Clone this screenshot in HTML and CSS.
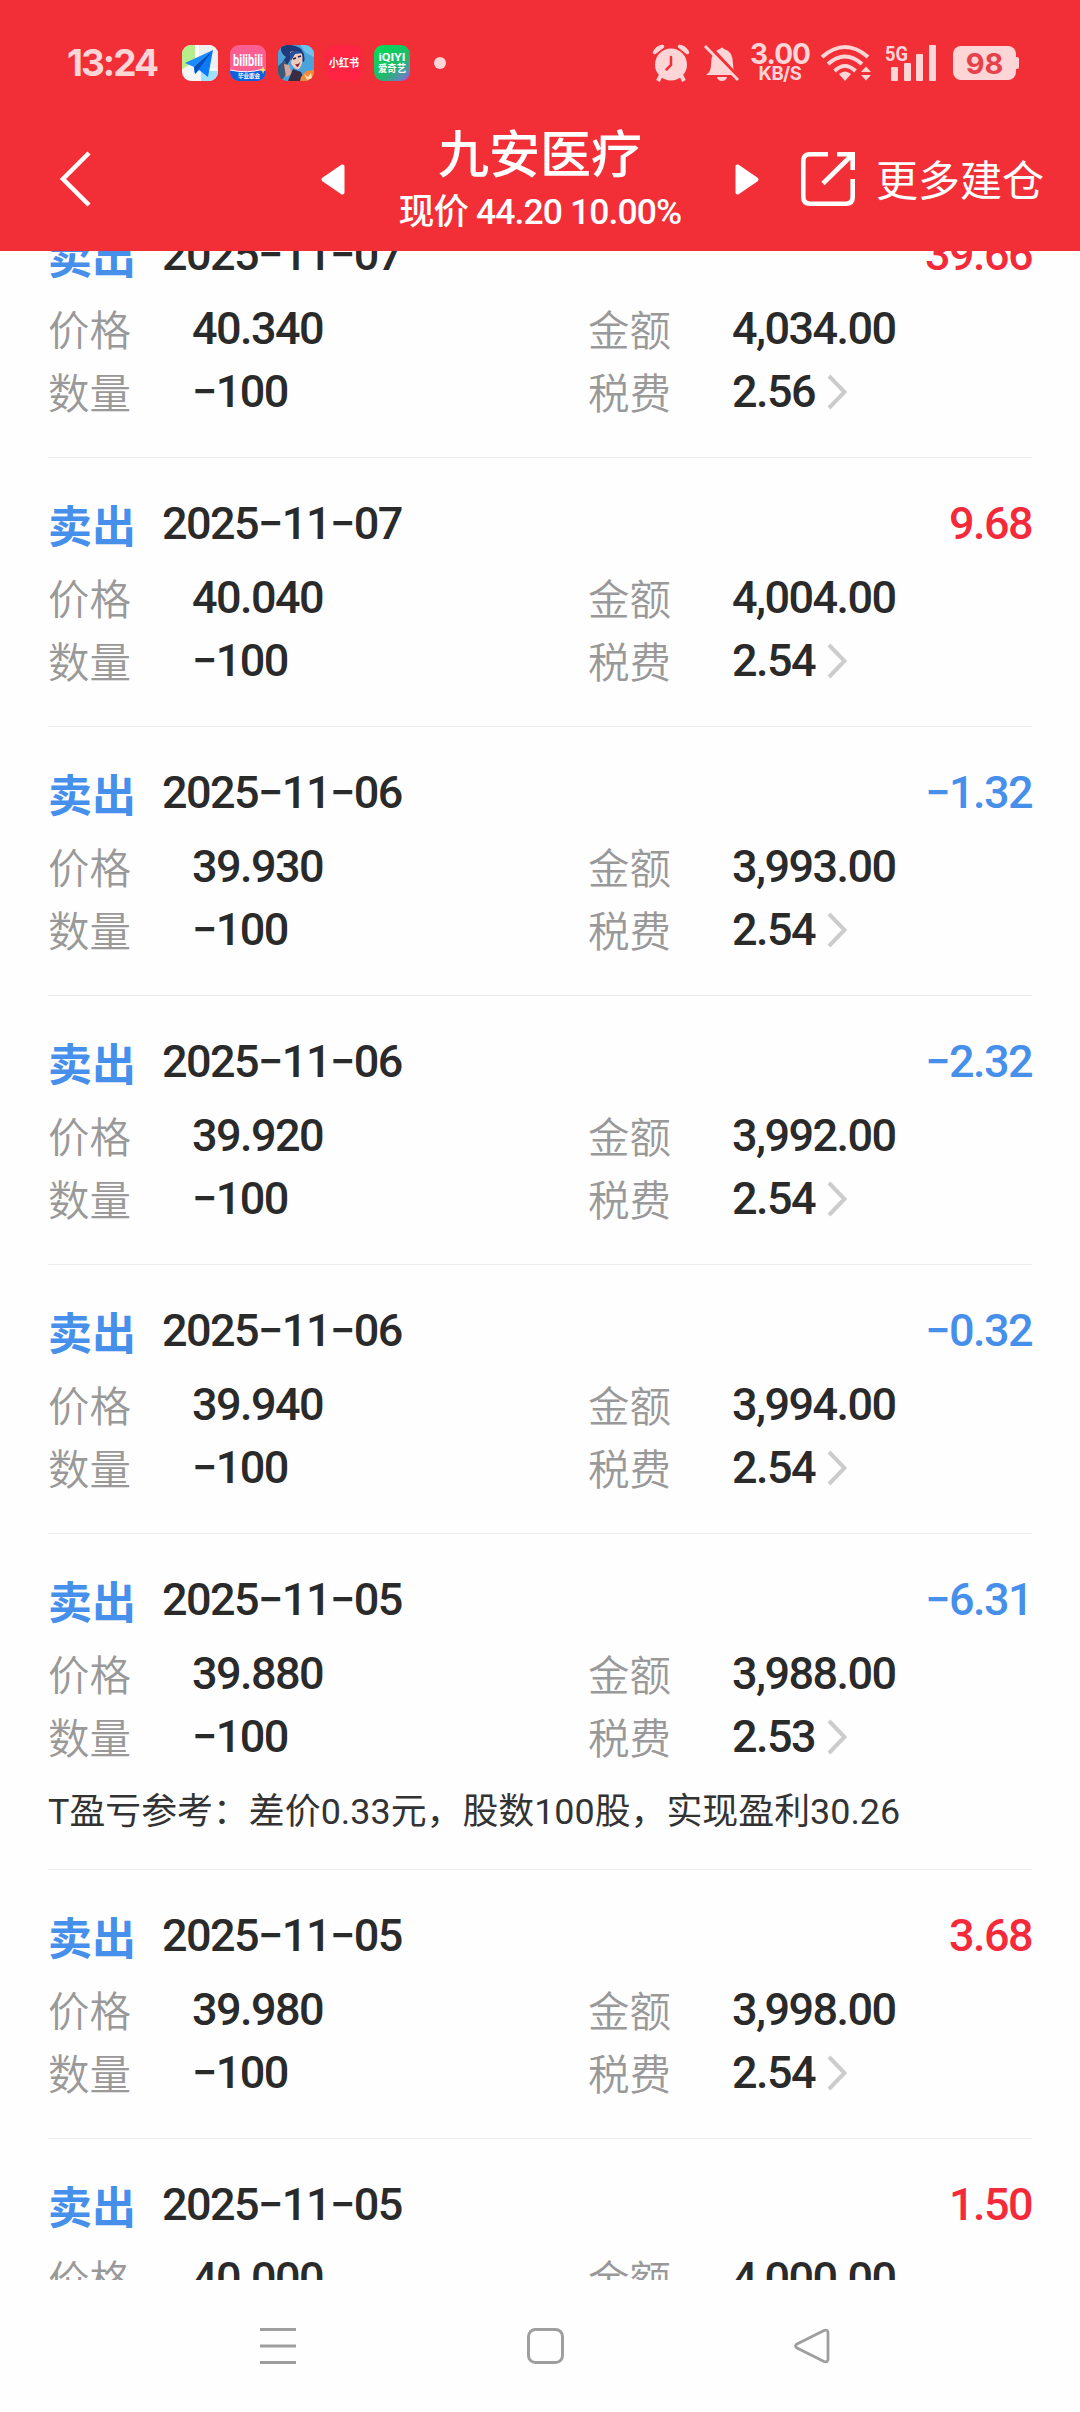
FILE: index.html
```html
<!DOCTYPE html>
<html lang="zh-CN">
<head>
  <meta charset="UTF-8">
  <title>九安医疗</title>
  <link rel="stylesheet" href="styles.css">
</head>
<body>

  <svg width="0" height="0" class="defs">
    <symbol id="chevron" viewBox="0 0 20 36"><path d="M2 2l15.500 16L2 34" fill="none" stroke="#ccc" stroke-width="4"/></symbol>
  </svg>

  <header class="header">
    <!-- 状态栏 -->
    <div class="status-bar">
      <span class="time">13:24</span>
      <div class="apps">
        <svg width="36" height="36" viewBox="0 0 36 36">
          <defs><clipPath id="round"><rect width="36" height="36" rx="9"/></clipPath></defs>
          <g clip-path="url(#round)">
            <rect width="36" height="36" fill="#f4f6f5"/>
            <path d="M0 0h13v17L0 24z" fill="#b5ee8b"/>
            <path d="M17 0h19v23H17z" fill="#eeeff0"/>
            <path d="M13 0h4v12l-4 3z" fill="#fff"/>
            <path d="M19 26h17v10H19z" fill="#9fe0fb"/>
            <path d="M31 5L3 18l9 4z" fill="#1a8cff"/>
            <path d="M31 5L12 22l1 7 4-4 9 7z" fill="#0a7cf8"/>
            <path d="M31 5L12 22l1 7 4-5z" fill="#0650c0"/>
          </g>
        </svg>
        <svg width="36" height="36" viewBox="0 0 36 36">
          <g clip-path="url(#round)">
            <rect width="36" height="36" fill="#fb5f92"/>
            <path d="M0 25q18 4 36-1v12H0z" fill="#0f5fdc"/>
            <path d="M0 25q18 4 33-1" fill="none" stroke="#fff" stroke-width="1"/>
            <path d="M33 21l1 3 3 1-3 1-1 3-1-3-3-1 3-1z" fill="#ffe36b"/>
          </g>
          <text x="18" y="21" class="app-bili" textLength="30" lengthAdjust="spacingAndGlyphs">bilibili</text>
          <text x="19" y="33" class="app-bili-sub">毕业歌会</text>
        </svg>
        <svg width="36" height="36" viewBox="0 0 36 36">
          <g clip-path="url(#round)">
            <rect width="36" height="36" fill="#4aa3da"/>
            <path d="M22 0h14v12l-8-4z" fill="#6fc2ea"/>
            <path d="M3 1q10-3 19 2 6 6 4 14l-12-6Q9 22 4 27q-2-8 4-15Q2 8 3 1z" fill="#1f3a78"/>
            <path d="M12 7q7-3 12 2 2 9-3 15-5 1-8-6z" fill="#f0c9bd"/>
            <path d="M11 9q5-6 13-1l-7 1-4 7z" fill="#24509a"/>
            <path d="M15 14l3-1M20 12l3-1" stroke="#27254a" stroke-width="1.500"/>
            <path d="M17 19q3 1 5-2-1 5-3 5z" fill="#8a1f36"/>
            <path d="M0 21l7-6 4 9-6 10H0z" fill="#3f5876"/>
            <path d="M6 19l5 1 3 9-6 3z" fill="#d6a59d"/>
            <path d="M10 36l5-12 8 3 4 9z" fill="#3b2c46"/>
            <path d="M23 32l5-6 8-1v11H22z" fill="#f28a3a"/>
            <path d="M26 29l4 3 3-4 1 5-5 2z" fill="#ffe2b4"/>
          </g>
        </svg>
        <svg width="36" height="36" viewBox="0 0 36 36">
          <rect width="36" height="36" rx="9" fill="#ff2442"/>
          <text x="18" y="22" class="app-red" textLength="30" lengthAdjust="spacingAndGlyphs">小红书</text>
        </svg>
        <svg width="36" height="36" viewBox="0 0 36 36">
          <defs>
            <linearGradient id="qiyi" x1="0.200" y1="0" x2="1" y2="1">
              <stop offset="0" stop-color="#07d95a"/>
              <stop offset="0.550" stop-color="#1fb968"/>
              <stop offset="0.800" stop-color="#558fae"/>
              <stop offset="1" stop-color="#a94df5"/>
            </linearGradient>
          </defs>
          <rect width="36" height="36" rx="9" fill="url(#qiyi)"/>
          <text x="18" y="16" class="app-qiyi" textLength="27" lengthAdjust="spacingAndGlyphs">iQIYI</text>
          <text x="18" y="27" class="app-qiyi-sub" textLength="28" lengthAdjust="spacingAndGlyphs">爱奇艺</text>
        </svg>
      </div>
      <span class="dot"></span>

      <div class="system">
        <svg class="alarm" width="38" height="38" viewBox="0 0 38 38">
          <path d="M9 31l-3 6M29 31l3 6" stroke="#fdd5d7" stroke-width="4"/>
          <path d="M1 9Q3 2 11 1L12 3 3 10zM37 9Q35 2 27 1L26 3l9 7z" fill="#fdd5d7" stroke="#fdd5d7"/>
          <circle cx="19" cy="20.500" r="16" fill="#fdd5d7"/>
          <path d="M19 13v8l-4.500 4.500" fill="none" stroke="#f22f37" stroke-width="2.500" stroke-linecap="round"/>
        </svg>
        <svg class="bell" width="36" height="38" viewBox="0 0 36 38">
          <path d="M2 31q5-3 5-10 0-10 5-14 3-2 4-2 2-3 4 0 9 2 9 15 0 8 5 11z" fill="#fdd5d7"/>
          <path d="M13 33h10q-1 4-5 4t-5-4z" fill="#fdd5d7"/>
          <path d="M4 1l32 34" stroke="#f22f37" stroke-width="4"/>
          <path d="M1 2l33 34" stroke="#fdd5d7" stroke-width="2.800"/>
        </svg>
        <div class="speed">
          <span class="speed-num">3.00</span>
          <span class="speed-unit">KB/S</span>
        </div>
        <svg class="wifi" width="52" height="38" viewBox="0 0 52 38">
          <g fill="none" stroke="#fdd5d7" stroke-width="4">
            <path d="M2 13Q25-7 48 13"/>
            <path d="M8 20q17-15 34 0"/>
            <path d="M14.500 27q10.500-10 21 0"/>
          </g>
          <path d="M25 37l-6-7q6-5 12 0z" fill="#fdd5d7"/>
          <path d="M41 28l5-5.500 5 5.500zM41 31h10l-5 5.500z" fill="#fdd5d7"/>
        </svg>
        <svg class="signal" width="54" height="38" viewBox="0 0 54 38">
          <text x="0" y="16.500" class="net" textLength="23" lengthAdjust="spacingAndGlyphs">5G</text>
          <g fill="#fdd5d7">
            <rect x="6" y="23" width="7" height="14" rx="1"/>
            <rect x="19" y="19" width="7" height="18" rx="1"/>
            <rect x="31" y="10" width="7" height="27" rx="1"/>
            <rect x="44" y="1" width="7" height="36" rx="1"/>
          </g>
        </svg>
        <span class="battery">98</span>
      </div>
    </div>

    <!-- 标题栏 -->
    <div class="title-bar">
      <svg class="back" width="34" height="56" viewBox="0 0 34 56"><path d="M31 2L5 28l26 26" fill="none" stroke="#fff" stroke-width="4.500"/></svg>
      <svg class="prev" width="24" height="31" viewBox="0 0 24 31"><path d="M21.500 2.500v26L2.500 15.500z" fill="#fff" stroke="#fff" stroke-width="4" stroke-linejoin="round"/></svg>
      <div class="stock">
        <h1>九安医疗</h1>
        <p>现价 44.20 10.00%</p>
      </div>
      <svg class="next" width="24" height="31" viewBox="0 0 24 31"><path d="M2.500 2.500v26l19-13z" fill="#fff" stroke="#fff" stroke-width="4" stroke-linejoin="round"/></svg>
      <div class="more">
        <svg width="54" height="54" viewBox="0 0 54 54" fill="none" stroke="#fff" stroke-width="4.600">
          <path d="M27 2.300H9Q2.300 2.300 2.300 9v36Q2.300 51.700 9 51.700h36q6.700 0 6.700-6.700V27"/>
          <path d="M36 2.300h15.700V18M51 3L22 31.500"/>
        </svg>
        <span>更多建仓</span>
      </div>
    </div>
  </header>

  <!-- 交易记录 -->
  <main class="list">
    <section class="record">
      <div class="head"><span class="type">卖出</span><span class="date">2025−11−07</span><span class="profit up">39.66</span></div>
      <div class="grid">
        <span class="label">价格</span><span class="value">40.340</span>
        <span class="label">金额</span><span class="value">4,034.00</span>
        <span class="label">数量</span><span class="value">−100</span>
        <span class="label">税费</span><span class="value">2.56<svg class="arrow"><use href="#chevron"/></svg></span>
      </div>
    </section>

    <section class="record">
      <div class="head"><span class="type">卖出</span><span class="date">2025−11−07</span><span class="profit up">9.68</span></div>
      <div class="grid">
        <span class="label">价格</span><span class="value">40.040</span>
        <span class="label">金额</span><span class="value">4,004.00</span>
        <span class="label">数量</span><span class="value">−100</span>
        <span class="label">税费</span><span class="value">2.54<svg class="arrow"><use href="#chevron"/></svg></span>
      </div>
    </section>

    <section class="record">
      <div class="head"><span class="type">卖出</span><span class="date">2025−11−06</span><span class="profit down">−1.32</span></div>
      <div class="grid">
        <span class="label">价格</span><span class="value">39.930</span>
        <span class="label">金额</span><span class="value">3,993.00</span>
        <span class="label">数量</span><span class="value">−100</span>
        <span class="label">税费</span><span class="value">2.54<svg class="arrow"><use href="#chevron"/></svg></span>
      </div>
    </section>

    <section class="record">
      <div class="head"><span class="type">卖出</span><span class="date">2025−11−06</span><span class="profit down">−2.32</span></div>
      <div class="grid">
        <span class="label">价格</span><span class="value">39.920</span>
        <span class="label">金额</span><span class="value">3,992.00</span>
        <span class="label">数量</span><span class="value">−100</span>
        <span class="label">税费</span><span class="value">2.54<svg class="arrow"><use href="#chevron"/></svg></span>
      </div>
    </section>

    <section class="record">
      <div class="head"><span class="type">卖出</span><span class="date">2025−11−06</span><span class="profit down">−0.32</span></div>
      <div class="grid">
        <span class="label">价格</span><span class="value">39.940</span>
        <span class="label">金额</span><span class="value">3,994.00</span>
        <span class="label">数量</span><span class="value">−100</span>
        <span class="label">税费</span><span class="value">2.54<svg class="arrow"><use href="#chevron"/></svg></span>
      </div>
    </section>

    <section class="record">
      <div class="head"><span class="type">卖出</span><span class="date">2025−11−05</span><span class="profit down">−6.31</span></div>
      <div class="grid">
        <span class="label">价格</span><span class="value">39.880</span>
        <span class="label">金额</span><span class="value">3,988.00</span>
        <span class="label">数量</span><span class="value">−100</span>
        <span class="label">税费</span><span class="value">2.53<svg class="arrow"><use href="#chevron"/></svg></span>
      </div>
      <p class="note">T盈亏参考：差价0.33元，股数100股，实现盈利30.26</p>
    </section>

    <section class="record">
      <div class="head"><span class="type">卖出</span><span class="date">2025−11−05</span><span class="profit up">3.68</span></div>
      <div class="grid">
        <span class="label">价格</span><span class="value">39.980</span>
        <span class="label">金额</span><span class="value">3,998.00</span>
        <span class="label">数量</span><span class="value">−100</span>
        <span class="label">税费</span><span class="value">2.54<svg class="arrow"><use href="#chevron"/></svg></span>
      </div>
    </section>

    <section class="record">
      <div class="head"><span class="type">卖出</span><span class="date">2025−11−05</span><span class="profit up">1.50</span></div>
      <div class="grid">
        <span class="label">价格</span><span class="value">40.000</span>
        <span class="label">金额</span><span class="value">4,000.00</span>
      </div>
    </section>
  </main>

  <!-- 系统导航 -->
  <nav class="nav">
    <svg width="36" height="38" viewBox="0 0 36 38"><path d="M0 2.500h36M0 19h36M0 35.500h36" stroke="#9e9e9e" stroke-width="3"/></svg>
    <svg width="38" height="38" viewBox="0 0 38 38"><rect x="2.500" y="2.500" width="34" height="33" rx="7" fill="none" stroke="#9e9e9e" stroke-width="3"/></svg>
    <svg width="38" height="38" viewBox="0 0 38 38"><path d="M31 3.500L4 17q-3 2 0 4l27 13.500q4 1.500 4-2.500V6q0-4-4-2.500z" fill="none" stroke="#9e9e9e" stroke-width="2.800" stroke-linejoin="round"/></svg>
  </nav>

</body>
</html>
```

FILE: styles.css
```css
* {
  box-sizing: border-box;
}

body {
  margin: 0;
  width: 1080px;
  height: 2412px;
  overflow: hidden;
  display: flex;
  flex-direction: column;
  background: #fefefe;
  color: #2a2a2a;
  font-family: Roboto, "Noto Sans CJK SC", sans-serif;
}

h1, p {
  margin: 0;
}

svg {
  display: block;
  flex: none;
  overflow: visible;
}

.defs {
  position: absolute;
}

.header {
  flex: none;
  height: 251px;
  background: #f22f37;
  color: #fff;
}

/* Status bar */
.status-bar {
  height: 108px;
  padding: 17px 61px 0 67px;
  display: flex;
  align-items: center;
  color: #fdd5d7;
}

.time {
  width: 115px;
  font-family: Inter, sans-serif;
  font-size: 37px;
  font-weight: 700;
  line-height: 40px;
  letter-spacing: -2px;
}

.apps {
  display: flex;
  gap: 12px;
}

.app-bili,
.app-bili-sub,
.app-red,
.app-qiyi,
.app-qiyi-sub {
  fill: #fff;
  text-anchor: middle;
  font-weight: 700;
}

.app-bili {
  font-size: 16px;
}

.app-bili-sub {
  font-size: 5.500px;
}

.app-red {
  font-size: 11px;
}

.app-qiyi {
  font-size: 10px;
}

.app-qiyi-sub {
  font-size: 10px;
}

.dot {
  width: 12px;
  height: 12px;
  margin-left: 24px;
  border-radius: 50%;
  background: #fdd5d7;
}

.system {
  margin-left: auto;
  display: flex;
  align-items: center;
}

.bell {
  margin-left: 14px;
}

.speed {
  width: 60px;
  margin-left: 10px;
  display: flex;
  flex-direction: column;
  align-items: center;
  font-family: Inter, sans-serif;
  font-weight: 700;
}

.speed-num {
  font-size: 28px;
  line-height: 22px;
  letter-spacing: -1px;
}

.speed-unit {
  font-size: 18.500px;
  line-height: 17px;
  letter-spacing: -0.500px;
}

.wifi {
  margin-left: 10px;
}

.signal {
  margin-left: 13px;
}

.net {
  fill: #fdd5d7;
  font-size: 21px;
  font-weight: 700;
}

.battery {
  position: relative;
  width: 63px;
  height: 34px;
  margin-left: 14px;
  margin-right: 3px;
  border-radius: 8px;
  background: #fdd5d7;
  color: #e8404a;
  font-family: Inter, sans-serif;
  font-size: 29px;
  font-weight: 700;
  line-height: 35px;
  text-align: center;
}

.battery::after {
  content: "";
  position: absolute;
  right: -3px;
  top: 11px;
  width: 4px;
  height: 12px;
  border-radius: 0 2px 2px 0;
  background: #fdd5d7;
}

/* Title bar */
.title-bar {
  height: 143px;
  padding: 0 36px 0 58px;
  display: flex;
  align-items: center;
}

.back,
.prev,
.next,
.more {
  margin-bottom: 1px;
}

.prev {
  margin-left: 229px;
}

.stock {
  width: 390px;
  text-align: center;
  padding-top: 4px;
}

.stock h1 {
  font-size: 51px;
  font-weight: 500;
  line-height: 60px;
}

.stock p {
  font-size: 35.500px;
  font-weight: 500;
  line-height: 52px;
  letter-spacing: -0.900px;
}

.more {
  margin-left: auto;
  display: flex;
  align-items: center;
  font-size: 42px;
}

.more span {
  margin-left: 21px;
  padding-top: 6px;
  line-height: 54px;
}

/* Records */
.list {
  flex: none;
  height: 2029px;
  padding: 0 48px;
  overflow: hidden;
}

.record {
  padding: 34px 0;
  border-bottom: 1px solid #ebebeb;
}

/* scrolled under the header */
.record:first-child {
  margin-top: -62px;
}

.head {
  display: flex;
  align-items: center;
  height: 63px;
  margin-bottom: 11px;
}

.type {
  width: 114px;
  padding-top: 9px;
  color: #468fea;
  font-size: 44px;
  font-weight: 700;
  line-height: 60px;
}

.date,
.profit,
.value {
  font-size: 45px;
  font-weight: 500;
  letter-spacing: -1.550px;
}

.profit {
  margin-left: auto;
}

.up {
  color: #f42a3b;
}

.down {
  color: #468fea;
}

.grid {
  display: grid;
  grid-template-columns: 144px 396px 144px 1fr;
  grid-auto-rows: 63px;
  align-items: center;
}

.label {
  padding-top: 6px;
  color: #999;
  font-size: 41.500px;
  font-weight: 350;
  line-height: 57px;
}

.value {
  display: flex;
  align-items: center;
}

.arrow {
  width: 20px;
  height: 36px;
  margin-left: 12px;
}

.note {
  height: 67px;
  padding-top: 21px;
  color: #333;
  font-size: 35.900px;
  line-height: 47px;
  white-space: nowrap;
}

/* System navigation */
.nav {
  flex: 1;
  display: flex;
  justify-content: space-between;
  align-items: center;
  padding: 0 249px 0 260px;
}
```
